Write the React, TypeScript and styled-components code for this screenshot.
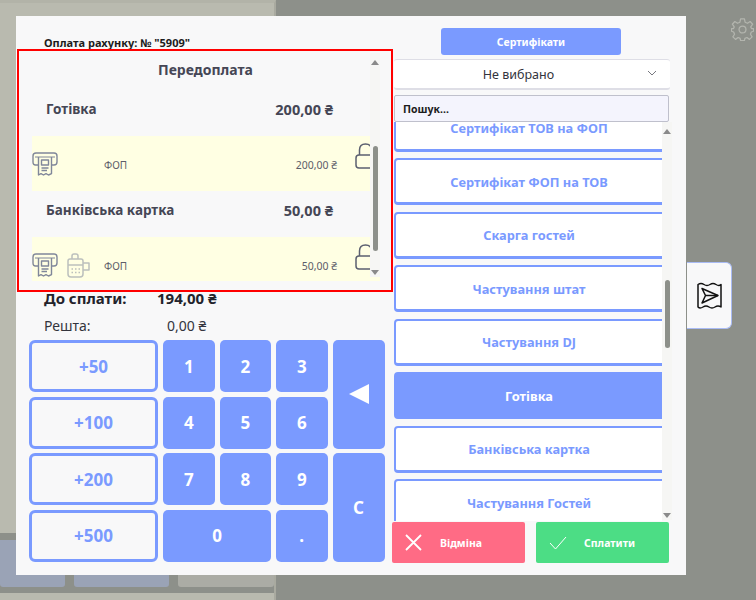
import styled, { createGlobalStyle } from 'styled-components';

const accent = '#7a9aff';
const ink = '#454655';

const GlobalStyle = createGlobalStyle`
  html, body {
    margin: 0;
    padding: 0;
    background: #8d908a;
  }
  * {
    box-sizing: border-box;
  }
  body {
    font-family: 'Noto Sans', 'Open Sans', sans-serif;
  }
`;

const Page = styled.div`
  position: relative;
  width: 756px;
  height: 600px;
  overflow: hidden;
  background: #8d908a;
`;

const BackdropColumn = styled.div`
  width: 276px;
  height: 600px;
  display: flex;
  flex-direction: column;
  background: #b9baaf;
  border-top: 3px solid #b2b3a8;
  border-right: 2px solid #a9aaa0;
`;

const BackdropSpacer = styled.div`
  flex: 1;
`;

const BackdropTiles = styled.div`
  height: 60px;
  display: flex;
  gap: 9px;
  padding: 7px 0 6px;
  background: #8d908a;
`;

const BackdropTile = styled.div<{ $width: number; $muted?: boolean }>`
  width: ${(p) => p.$width}px;
  border-radius: 0 0 3px 3px;
  background: ${(p) => (p.$muted ? '#abaca5' : '#9aa3b6')};
`;

const BackdropFooter = styled.div`
  height: 7px;
  background: #b9baaf;
`;

const Modal = styled.div`
  position: absolute;
  left: 16px;
  top: 16px;
  width: 670px;
  height: 559px;
  display: flex;
  background: #f8f8f9;
`;

const LeftColumn = styled.div`
  width: 377px;
  flex-shrink: 0;
  padding-left: 1px;
`;

const Title = styled.div`
  height: 33px;
  padding: 20px 0 0 27px;
  font-size: 11px;
  line-height: 13px;
  font-weight: 700;
  color: #1c1c1c;
`;

const PrepayFrame = styled.div`
  position: relative;
  width: 376px;
  height: 243px;
  padding: 2px 2px 0;
  border: 2px solid #ff0000;
`;

const PrepayScroll = styled.div`
  height: 228px;
  overflow: hidden;
  padding: 0 9px 0 11px;
`;

const PrepayHeading = styled.div`
  height: 31px;
  padding: 9px 0 0 0;
  text-align: center;
  font-size: 14px;
  line-height: 16px;
  font-weight: 700;
  color: ${ink};

  span {
    display: inline-block;
    width: 93px;
    margin-left: -3px;
    white-space: nowrap;
  }
`;

const MethodRow = styled.div<{ $height: number }>`
  height: ${(p) => p.$height}px;
  display: flex;
  align-items: flex-end;
  justify-content: space-between;
  padding: 0 47px 17px 14px;
  line-height: 20px;
  font-weight: 700;
  color: ${ink};
`;

const MethodName = styled.span`
  font-size: 13.5px;
`;

const MethodSum = styled.span`
  font-size: 14.5px;
`;

const FiscalRow = styled.div<{ $height: number }>`
  height: ${(p) => p.$height}px;
  display: flex;
  align-items: flex-start;
  background: #ffffe3;
  color: #5c5d69;
`;

const FiscalIcons = styled.div`
  width: 72px;
  margin-top: 16px;
  display: flex;
  gap: 8px;
  flex-shrink: 0;
`;

const FiscalName = styled.span`
  flex: 1;
  margin-top: 22px;
  font-size: 10px;
  line-height: 14px;
`;

const FiscalAmount = styled.span`
  width: 120px;
  margin: 22px 18px 0 0;
  text-align: right;
  font-size: 10.5px;
  line-height: 14px;
`;

const LockBox = styled.div`
  width: 25px;
  height: 26px;
  margin-top: 7px;
  flex-shrink: 0;
  color: #5c6070;
`;

const ScrollTrack = styled.div<{ $right: number; $top: number; $height: number }>`
  position: absolute;
  right: ${(p) => p.$right}px;
  top: ${(p) => p.$top}px;
  width: 10px;
  height: ${(p) => p.$height}px;
  background: #f6f6f4;
`;

const ScrollThumb = styled.div<{ $top: number; $height: number }>`
  position: absolute;
  left: 3px;
  top: ${(p) => p.$top}px;
  width: 5px;
  height: ${(p) => p.$height}px;
  border-radius: 3px;
  background: #8d908a;
`;

const ScrollArrow = styled.div<{ $down?: boolean }>`
  position: absolute;
  left: 1px;
  ${(p) => (p.$down ? 'bottom: 2px;' : 'top: 7px;')}
  width: 0;
  height: 0;
  border-left: 4px solid transparent;
  border-right: 4px solid transparent;
  ${(p) => (p.$down ? 'border-top: 5px solid #8a8a8a;' : 'border-bottom: 5px solid #8a8a8a;')}
`;

const Totals = styled.div`
  padding-left: 27px;
`;

const TotalRow = styled.div<{ $bold?: boolean; $height: number; $valueLeft: number; $liftBy: number }>`
  height: ${(p) => p.$height}px;
  padding-bottom: ${(p) => p.$liftBy}px;
  display: flex;
  align-items: center;
  font-size: ${(p) => (p.$bold ? 15 : 14)}px;
  font-weight: ${(p) => (p.$bold ? 700 : 400)};
  color: ${(p) => (p.$bold ? '#23232b' : '#33343d')};

  span:first-child {
    width: ${(p) => p.$valueLeft}px;
  }
`;

const Keypad = styled.div`
  margin-left: 12px;
  width: 355px;
  display: grid;
  grid-template-columns: 129px 51.5px 51.5px 51.5px 52px;
  grid-template-rows: repeat(4, 52px);
  column-gap: 5px;
  row-gap: 4.6px;
`;

const QuickKey = styled.button`
  border: 3px solid ${accent};
  border-radius: 6px;
  background: #f8f8f9;
  color: ${accent};
  font-family: inherit;
  font-size: 17px;
  font-weight: 700;
  padding: 0;
`;

const Key = styled.button<{ $col?: number; $row?: number }>`
  grid-column: span ${(p) => p.$col ?? 1};
  grid-row: span ${(p) => p.$row ?? 1};
  display: flex;
  align-items: center;
  justify-content: center;
  border: none;
  border-radius: 5px;
  background: ${accent};
  color: #fff;
  font-family: inherit;
  font-size: 17px;
  font-weight: 700;
  padding: 0;
`;

const BackArrow = styled.span`
  width: 0;
  height: 0;
  border-top: 10px solid transparent;
  border-bottom: 10px solid transparent;
  border-right: 20px solid #fff;
`;

const RightColumn = styled.div`
  position: relative;
  flex: 1;
  display: flex;
  flex-direction: column;
  align-items: flex-start;
  padding: 12px 0 0 1px;
`;

const CertificatesButton = styled.button`
  align-self: flex-start;
  margin-left: 47px;
  width: 180px;
  height: 27px;
  border: none;
  border-radius: 3px;
  background: ${accent};
  color: #fff;
  font-family: inherit;
  font-size: 10.5px;
  font-weight: 700;
`;

const SelectBox = styled.div`
  position: relative;
  width: 276px;
  height: 31px;
  margin-top: 4px;
  display: flex;
  align-items: center;
  justify-content: center;
  padding-right: 27px;
  border-top: 1px solid #dedee6;
  border-bottom: 2px solid #dedee6;
  border-radius: 3px;
  background: #fff;
  color: #33343d;
  font-size: 12.5px;
`;

const Chevron = styled.svg`
  position: absolute;
  right: 13px;
  top: 10px;
  color: #77787f;
`;

const SearchBox = styled.div`
  width: 275px;
  height: 27px;
  margin-top: 5px;
  padding: 0 8px;
  display: flex;
  align-items: center;
  border: 1px solid #bfc0cc;
  border-radius: 2px;
  background: #f4f4fd;
  color: #1c1c1c;
  font-size: 10.5px;
  font-weight: 700;
`;

const ListClip = styled.div`
  width: 268px;
  height: 399px;
  overflow: hidden;
`;

const PaymentList = styled.div`
  width: 280px;
  margin-top: -17.5px;
  display: flex;
  flex-direction: column;
  gap: 6.5px;
`;

const PaymentItem = styled.div<{ $active?: boolean }>`
  height: 47px;
  flex-shrink: 0;
  display: flex;
  align-items: center;
  justify-content: center;
  padding: 1px 10px 0 0;
  border: 2px solid ${accent};
  border-bottom-width: 3px;
  border-radius: 4px;
  background: ${(p) => (p.$active ? accent : '#fff')};
  color: ${(p) => (p.$active ? '#fff' : accent)};
  font-size: 12.8px;
  font-weight: 700;
`;

const ActionRow = styled.div`
  position: absolute;
  left: -1px;
  top: 506px;
  width: 277px;
  display: flex;
  justify-content: space-between;
`;

const ActionButton = styled.button<{ $color: string; $iconGap: number }>`
  width: 133px;
  height: 41px;
  display: flex;
  align-items: center;
  padding: 0 0 0 13px;
  border: none;
  border-radius: 2px;
  background: ${(p) => p.$color};
  color: #fff;
  font-family: inherit;
  font-size: 10.5px;
  font-weight: 700;

  svg {
    flex-shrink: 0;
    margin-right: ${(p) => p.$iconGap}px;
  }
`;

const SideTab = styled.button`
  position: absolute;
  left: 687px;
  top: 262px;
  width: 45px;
  height: 67px;
  padding: 0;
  display: flex;
  align-items: center;
  justify-content: center;
  border: 1px solid #a9bbf5;
  border-left: none;
  border-radius: 0 6px 6px 0;
  background: #f8f8f9;
  color: #111;
`;

const GearButton = styled.div`
  position: absolute;
  left: 731px;
  top: 18px;
  width: 23px;
  height: 23px;
  color: #b3b5ae;
`;

const ReceiptIcon = () => (
  <svg width="26" height="25" viewBox="0 0 26 25" fill="none" stroke="#80879a" strokeWidth="1.4" strokeLinejoin="round">
    <path d="M6 13H3.5Q1 13 1 10V4Q1 1 4 1H22Q25 1 25 4V10Q25 13 22 13H20" />
    <path d="M3 5H23" strokeWidth="1" />
    <path d="M6.5 5V23L9 21.6 11.5 23 14 21.6 16.5 23 19.5 21.6V5" />
    <rect x="9.5" y="8" width="7" height="5" />
    <path d="M9.5 16H16.5M9.5 18.5H15" />
  </svg>
);

const TerminalIcon = () => (
  <svg width="24" height="25" viewBox="0 0 24 25" fill="none" stroke="#bcc0bd" strokeWidth="1.5" strokeLinejoin="round">
    <path d="M2 8Q2 6 4 6H15Q17 6 17 8V21Q17 24 14 24H5Q2 24 2 21Z" />
    <path d="M6 6V3Q6 1 8 1H10Q12 1 12 3V6" />
    <path d="M2 12H17" />
    <path d="M17 10H23V17H17" />
    <path d="M5.5 16H7M9 16H10.5M12.5 16H14M5.5 19.5H7M9 19.5H10.5M12.5 19.5H14" strokeWidth="1.3" />
  </svg>
);

const LockIcon = () => (
  <svg width="25" height="26" viewBox="0 0 25 26" fill="none" stroke="currentColor" strokeWidth="1.5">
    <path d="M24 12H4Q1 12 1 15V22Q1 25 4 25H24" />
    <path d="M4.5 12V7Q4.5 1 10.5 1Q16.5 1 16.5 7V12" />
  </svg>
);

const GearIcon = () => (
  <svg width="23" height="23" viewBox="0 0 24 24" fill="none" stroke="currentColor" strokeWidth="1.3" strokeLinejoin="round">
    <circle cx="12" cy="12" r="3.6" />
    <path d="M10 1H14L14.7 4.4 17.2 5.5 20 3.7 22.6 6.5 20.6 9.3 21.4 11 23.5 11.2V13.8L21.2 14.6 20.3 17 22 19.7 19.3 22.3 16.6 20.4 14.5 21.3 14 23.5H10L9.5 21.3 7.4 20.4 4.7 22.3 2 19.7 3.7 17 2.8 14.6.5 13.8V11.2L2.6 11 3.4 9.3 1.4 6.5 4 3.7 6.8 5.5 9.3 4.4Z" />
  </svg>
);

const SendReceiptIcon = () => (
  <svg width="25" height="27" viewBox="0 0 25 27" fill="none" stroke="currentColor" strokeWidth="1.5" strokeLinejoin="round">
    <path d="M1 2.5Q4 .5 7 2.5T13 2.5 19 2.5 24 2.5V25Q21 23 18 25T12 25 6 25 1 25Z" />
    <path d="M5 6.5L21 13.5 5 21 8.5 13.5Z" />
    <path d="M8.5 13.5H21" />
  </svg>
);

const payments = [
  'Сертифікат ТОВ на ФОП',
  'Сертифікат ФОП на ТОВ',
  'Скарга гостей',
  'Частування штат',
  'Частування DJ',
  'Готівка',
  'Банківська картка',
  'Частування Гостей',
];

const App = () => {
  return (
    <Page>
      <GlobalStyle />
      <BackdropColumn>
        <BackdropSpacer />
        <BackdropTiles>
          <BackdropTile $width={65} />
          <BackdropTile $width={96} />
          <BackdropTile $width={96} $muted />
        </BackdropTiles>
        <BackdropFooter />
      </BackdropColumn>

      <Modal>
        <LeftColumn>
          <Title>Оплата рахунку: № "5909"</Title>
          <PrepayFrame>
            <PrepayScroll>
              <PrepayHeading>
                <span>Передоплата</span>
              </PrepayHeading>
              <MethodRow $height={52}>
                <MethodName>Готівка</MethodName>
                <MethodSum>200,00 ₴</MethodSum>
              </MethodRow>
              <FiscalRow $height={55}>
                <FiscalIcons>
                  <ReceiptIcon />
                </FiscalIcons>
                <FiscalName>ФОП</FiscalName>
                <FiscalAmount>200,00 ₴</FiscalAmount>
                <LockBox>
                  <LockIcon />
                </LockBox>
              </FiscalRow>
              <MethodRow $height={46}>
                <MethodName>Банківська картка</MethodName>
                <MethodSum>50,00 ₴</MethodSum>
              </MethodRow>
              <FiscalRow $height={44}>
                <FiscalIcons>
                  <ReceiptIcon />
                  <TerminalIcon />
                </FiscalIcons>
                <FiscalName>ФОП</FiscalName>
                <FiscalAmount>50,00 ₴</FiscalAmount>
                <LockBox>
                  <LockIcon />
                </LockBox>
              </FiscalRow>
            </PrepayScroll>
            <ScrollTrack $right={11} $top={2} $height={224}>
              <ScrollArrow />
              <ScrollThumb $top={93} $height={105} />
              <ScrollArrow $down />
            </ScrollTrack>
          </PrepayFrame>
          <Totals>
            <TotalRow $bold $height={20} $liftBy={8} $valueLeft={113}>
              <span>До сплати:</span>
              <span>194,00 ₴</span>
            </TotalRow>
            <TotalRow $height={28} $liftBy={2} $valueLeft={123}>
              <span>Решта:</span>
              <span>0,00 ₴</span>
            </TotalRow>
          </Totals>
          <Keypad>
            <QuickKey>+50</QuickKey>
            <Key>1</Key>
            <Key>2</Key>
            <Key>3</Key>
            <Key $row={2}>
              <BackArrow />
            </Key>
            <QuickKey>+100</QuickKey>
            <Key>4</Key>
            <Key>5</Key>
            <Key>6</Key>
            <QuickKey>+200</QuickKey>
            <Key>7</Key>
            <Key>8</Key>
            <Key>9</Key>
            <Key $row={2}>C</Key>
            <QuickKey>+500</QuickKey>
            <Key $col={2}>0</Key>
            <Key>.</Key>
          </Keypad>
        </LeftColumn>

        <RightColumn>
          <CertificatesButton>Сертифікати</CertificatesButton>
          <SelectBox>
            Не вибрано
            <Chevron width="10" height="6" viewBox="0 0 10 6" fill="none" stroke="currentColor" strokeWidth="1">
              <path d="M1 1L5 5 9 1" />
            </Chevron>
          </SelectBox>
          <SearchBox>Пошук...</SearchBox>
          <ListClip>
            <PaymentList>
              {payments.map((name) => (
                <PaymentItem key={name} $active={name === 'Готівка'}>
                  {name}
                </PaymentItem>
              ))}
            </PaymentList>
          </ListClip>
          <ScrollTrack $right={14} $top={106} $height={398}>
            <ScrollArrow />
            <ScrollThumb $top={158} $height={68} />
            <ScrollArrow $down />
          </ScrollTrack>
          <ActionRow>
            <ActionButton $color="#ff6b85" $iconGap={18}>
              <svg width="17" height="17" viewBox="0 0 17 17" stroke="#fff" strokeWidth="1.8">
                <path d="M1 1L16 16M16 1L1 16" />
              </svg>
              Відміна
            </ActionButton>
            <ActionButton $color="#4cdd85" $iconGap={17}>
              <svg width="18" height="14" viewBox="0 0 18 14" fill="none" stroke="#fff" strokeWidth="1">
                <path d="M1 7L6.5 13 17 1" />
              </svg>
              Сплатити
            </ActionButton>
          </ActionRow>
        </RightColumn>
      </Modal>

      <SideTab>
        <SendReceiptIcon />
      </SideTab>
      <GearButton>
        <GearIcon />
      </GearButton>
    </Page>
  );
};

export default App;
